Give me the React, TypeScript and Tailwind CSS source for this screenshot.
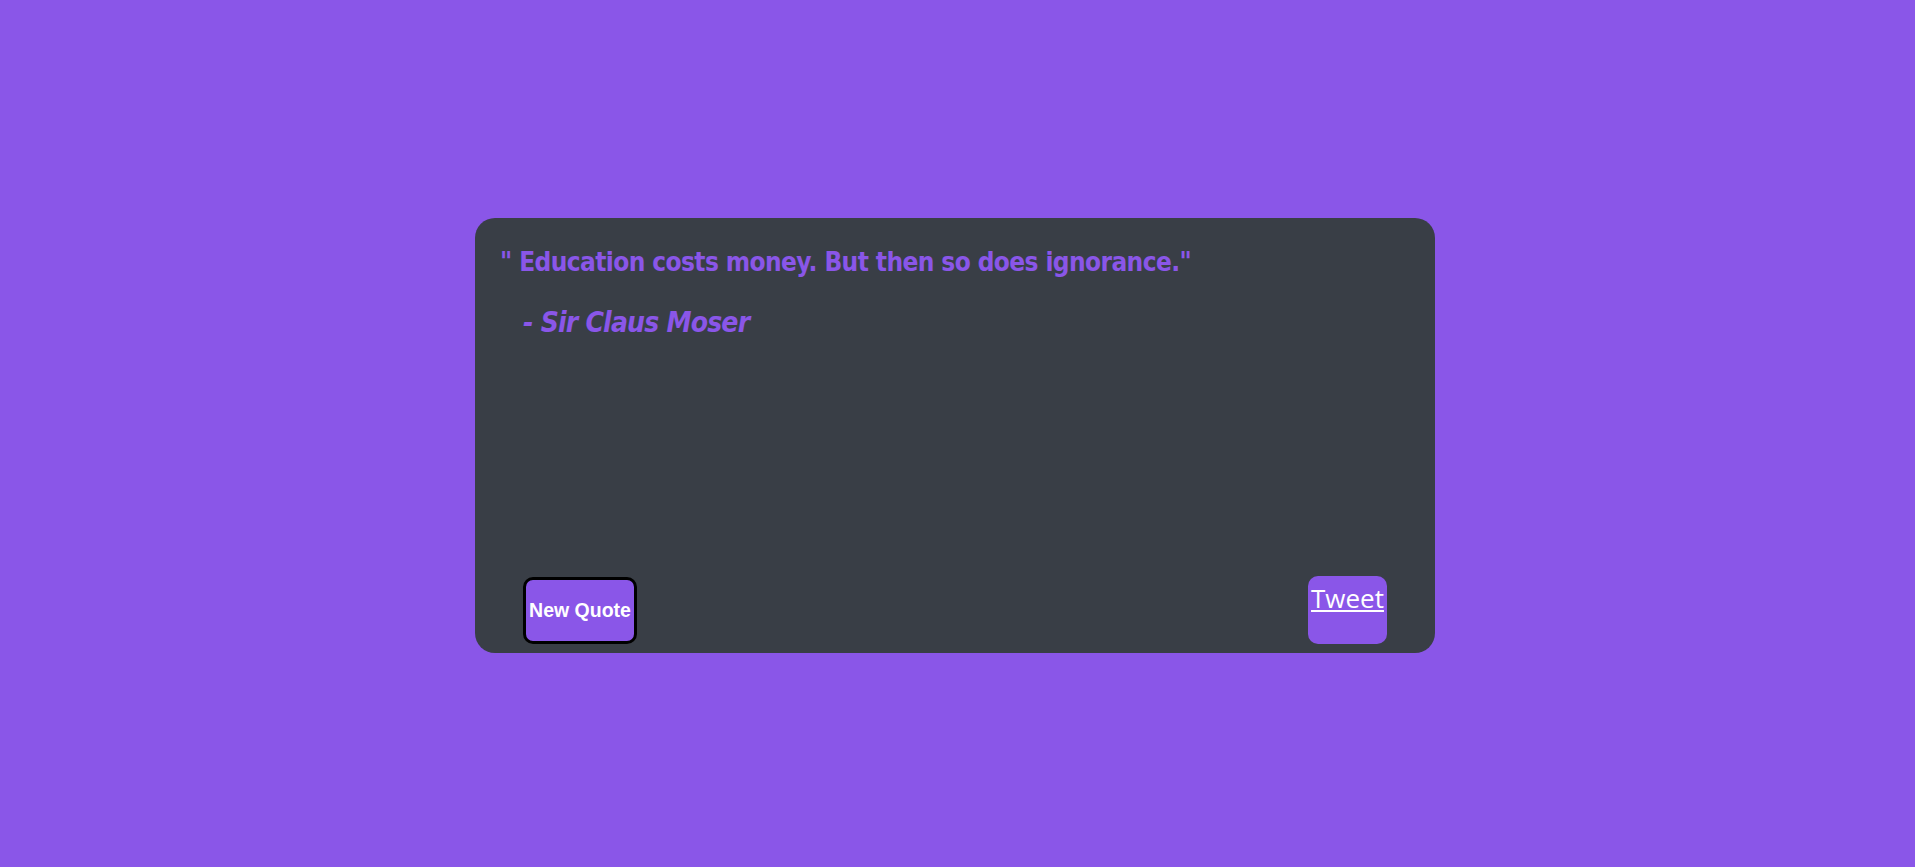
import React from 'react'

const quote = {
  text: 'Education costs money. But then so does ignorance.',
  author: 'Sir Claus Moser',
}

export default function App() {
  return (
    <div className="min-h-screen w-full bg-[#8a56e8] flex items-center justify-center pr-[5px] pt-[4px]">
      <div className="w-[960px] h-[435px] rounded-[20px] bg-[#393e46] flex flex-col justify-between pt-[27px] pb-[9px] px-[25px]">
        <div className="text-[#8a56e8] font-bold [font-family:'Liberation_Sans_Narrow','DejaVu_Sans_Condensed',sans-serif]">
          <p className="text-[26px] leading-[34px] tracking-[-0.6px]">" {quote.text}"</p>
          <p className="mt-[26px] pl-[23px] text-[28px] leading-[36px] tracking-[-0.8px] italic">- {quote.author}</p>
        </div>

        <div className="flex items-end justify-between px-[23px]">
          <button className="w-[114px] h-[67px] rounded-[10px] border-[3px] border-black bg-[#8a56e8] text-white font-bold text-[19.5px] [font-family:'Liberation_Sans',Arial,sans-serif] flex items-center justify-center">
            New Quote
          </button>
          <button className="w-[79px] h-[68px] rounded-[10px] bg-[#8a56e8] flex items-start justify-center pt-[4px]">
            <a href="#" className="text-white underline text-[26px] leading-[36px] [font-family:'Open_Sans',sans-serif]">
              Tweet
            </a>
          </button>
        </div>
      </div>
    </div>
  )
}
